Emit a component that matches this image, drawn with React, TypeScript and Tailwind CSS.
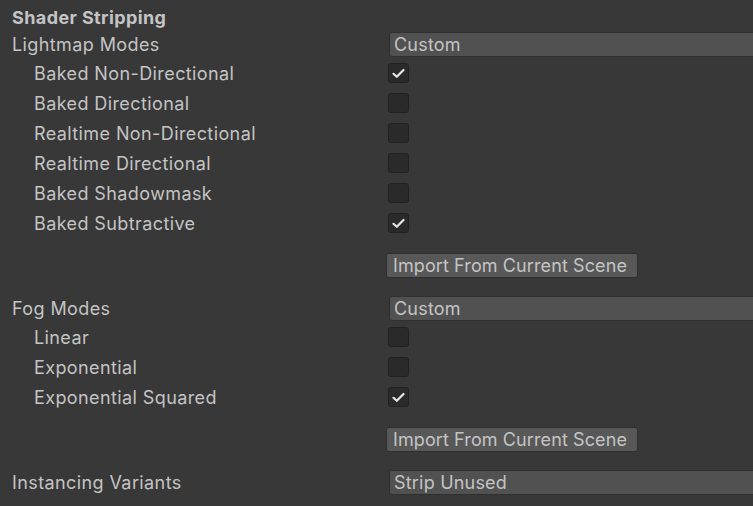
import React from 'react'

type Item = { label: string; checked: boolean }

const lightmapItems: Item[] = [
    { label: 'Baked Non-Directional', checked: true },
    { label: 'Baked Directional', checked: false },
    { label: 'Realtime Non-Directional', checked: false },
    { label: 'Realtime Directional', checked: false },
    { label: 'Baked Shadowmask', checked: false },
    { label: 'Baked Subtractive', checked: true },
]

const fogItems: Item[] = [
    { label: 'Linear', checked: false },
    { label: 'Exponential', checked: false },
    { label: 'Exponential Squared', checked: true },
]

function Checkbox({ checked }: { checked: boolean }) {
    return (
        <div className="ml-[388px] w-[21px] h-[20px] rounded-[3px] bg-[#2a2a2a] border border-[#212121] flex items-center justify-center">
            {checked && (
                <svg width="13" height="11" viewBox="0 0 13 11">
                    <path d="M1.5 5.8 L4.8 8.8 L11.5 2" fill="none" stroke="#e6e6e6" strokeWidth="2.2" strokeLinecap="round" strokeLinejoin="round" />
                </svg>
            )}
        </div>
    )
}

function Dropdown({ label, value }: { label: string; value: string }) {
    return (
        <div className="h-[28px] flex items-center relative">
            <span className="absolute left-[12px] tracking-[0.4px]">{label}</span>
            <div className="ml-[389px] w-[380px] h-[25px] shrink-0 rounded-[3px] bg-[#515151] border border-[#303030] flex items-center pl-[4px]">
                {value}
            </div>
        </div>
    )
}

function CheckRow({ item }: { item: Item }) {
    return (
        <div className="h-[30px] flex items-center relative">
            <span className="absolute left-[34px] tracking-[0.4px]">{item.label}</span>
            <Checkbox checked={item.checked} />
        </div>
    )
}

function ImportButton() {
    return (
        <div className="h-[56px] pt-[15px]">
            <div className="ml-[386px] w-[252px] h-[25px] rounded-[3px] bg-[#585858] border border-[#303030] flex items-center pl-[6px] tracking-[0.1px]">
                Import From Current Scene
            </div>
        </div>
    )
}

export default function App() {
    return (
        <div className="w-[753px] h-[506px] bg-[#383838] text-[#c4c4c4] text-[18px] overflow-hidden pt-[4px] font-['Inter',sans-serif] tracking-[0.2px]">
            <div className="h-[26px] flex items-center pl-[12px] font-bold tracking-[0.4px]">Shader Stripping</div>
            <Dropdown label="Lightmap Modes" value="Custom" />
            {lightmapItems.map((it) => <CheckRow key={it.label} item={it} />)}
            <ImportButton />
            <Dropdown label="Fog Modes" value="Custom" />
            {fogItems.map((it) => <CheckRow key={it.label} item={it} />)}
            <ImportButton />
            <Dropdown label="Instancing Variants" value="Strip Unused" />
        </div>
    )
}
